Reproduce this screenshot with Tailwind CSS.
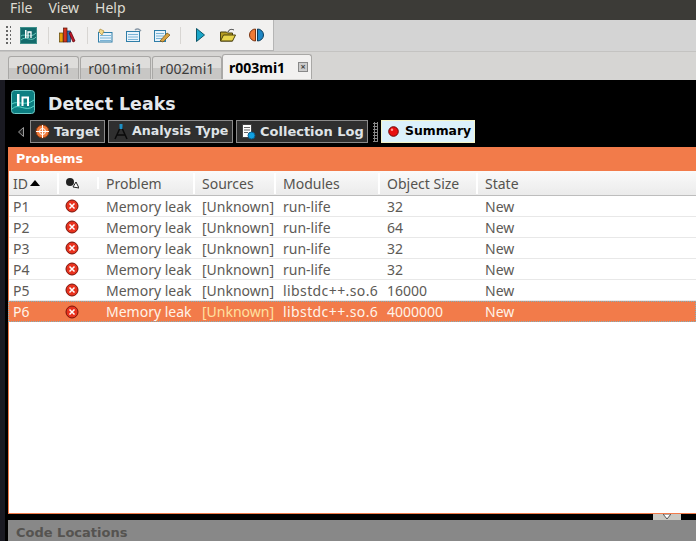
<!DOCTYPE html>
<html><head><meta charset="utf-8"><script src="https://cdn.jsdelivr.net/npm/@tailwindcss/browser@4"></script></head>
<body class="m-0 overflow-hidden bg-black">
<div class="w-[696px] h-[541px] flex flex-col overflow-hidden font-['Noto_Sans',sans-serif] text-[14px]">
  <div class="h-[20px] bg-[#3c3b37] text-[#dfdbd2] flex items-start gap-[16px] pl-[10px] text-[14px] leading-[16px]"><span>File</span><span>View</span><span>Help</span></div>
  <div class="h-[31px] bg-[#d4d4d4] flex">
    <div class="w-[274px] h-[31px] bg-[#f2f1f0] border-r border-b border-[#b5b5b5] flex items-center pl-[2px]">
      <div class="w-[6px] h-[20px] ml-[3px] bg-[radial-gradient(#666_1px,transparent_1.2px)] bg-[length:4px_4px]"></div>
      <svg class="ml-[9px]" width="17" height="17" viewBox="0 0 17 17"><rect x=".5" y=".5" width="16" height="16" fill="#136b6c" stroke="#3f8f8a"/><path d="M1 13C6 8 11 16 16 10M1 9C5 6 10 12 16 6" stroke="#69c9bd" fill="none"/><rect x="5" y="3" width="1.500" height="8" fill="#fff"/><path d="M8 11V5h3v6" stroke="#fff" fill="none" stroke-width="1.300"/></svg>
      <div class="w-px h-[17px] bg-[#d8d6d3] ml-[11px]"></div>
      <svg class="ml-[10px]" width="17" height="16" viewBox="0 0 17 16"><rect x=".5" y="6" width="3.500" height="9" fill="#eba10a" stroke="#5c4200" stroke-width=".7"/><rect x="4.500" y="1" width="3.500" height="14" fill="#d2341f" stroke="#5a1005" stroke-width=".7"/><rect x="8.500" y="4" width="3" height="11" fill="#2d6fb8" stroke="#12325c" stroke-width=".7"/><path d="M12 5l4 9-2 1-4-9z" fill="#c4162c" stroke="#500" stroke-width=".7"/></svg>
      <div class="w-px h-[17px] bg-[#d8d6d3] ml-[11px]"></div>
      <svg class="ml-[10px]" width="15" height="15" viewBox="0 0 15 15"><rect x=".5" y="4.500" width="13.500" height="9.500" fill="#e8f3fb" stroke="#2f7ea8"/><path d="M2 7.500h11M2 10h11M2 12.500h11" stroke="#79b3d6"/><path d="M2 1l4 2-2 4-3-3z" fill="#f3d98a" stroke="#a8893b" stroke-width=".7"/></svg>
      <svg class="ml-[13px]" width="16" height="16" viewBox="0 0 16 16"><rect x=".5" y="4.500" width="13" height="10" fill="#e8f3fb" stroke="#2f7ea8"/><path d="M2 7.500h10M2 10h10M2 12.500h10" stroke="#79b3d6"/><path d="M9 3c2-2 4-1 6 1" stroke="#8a9aa8" fill="none" stroke-width="1.500"/></svg>
      <svg class="ml-[12px]" width="17" height="16" viewBox="0 0 17 16"><rect x=".5" y="3.500" width="11" height="11" fill="#e8f3fb" stroke="#2f7ea8"/><path d="M2 6.500h8M2 9h8M2 11.500h6" stroke="#79b3d6"/><path d="M6 14l7-8 3 2-7 7z" fill="#d9a441" stroke="#6e4c10" stroke-width=".7"/></svg>
      <div class="w-px h-[17px] bg-[#d8d6d3] ml-[9px]"></div>
      <svg class="ml-[15px]" width="9" height="14" viewBox="0 0 9 14"><path d="M.5 .5l8 6.500-8 6.500z" fill="#1aa6c8" stroke="#0b5568"/></svg>
      <svg class="ml-[15px]" width="16" height="14" viewBox="0 0 16 14"><path d="M.5 4h6l1 1h5v8h-12z" fill="#b59c22" stroke="#4b410c"/><path d="M.5 13l3-6h12l-3 6z" fill="#e8d44a" stroke="#4b410c"/><path d="M8 4c1-3 4-3 6-2" stroke="#333" fill="none"/></svg>
      <svg class="ml-[13px]" width="15" height="14" viewBox="0 0 15 14"><path d="M6.500 1A6 6 0 0 0 6.500 13z" fill="#ef7a35" stroke="#7a3412"/><path d="M8.500 1A6 6 0 0 1 8.500 13z" fill="#1f86c4" stroke="#0c3d5c"/></svg>
    </div>
  </div>
  <div class="h-[29px] bg-[#d6d5d3] flex items-end pl-[8px] border-t border-[#c4c3c1] text-[14px] text-[#3c3c3c]">
    <div class="w-[71px] h-[23px] mr-px bg-[linear-gradient(#dedddb_50%,#c8c7c5_50%)] border border-b-0 border-[#a9a8a6] rounded-t-[3px] flex items-center justify-center mb-[1px]">r000mi1</div>
    <div class="w-[71px] h-[23px] mr-px bg-[linear-gradient(#dedddb_50%,#c8c7c5_50%)] border border-b-0 border-[#a9a8a6] rounded-t-[3px] flex items-center justify-center mb-[1px]">r001mi1</div>
    <div class="w-[70px] h-[23px] bg-[linear-gradient(#dedddb_50%,#c8c7c5_50%)] border border-b-0 border-[#a9a8a6] rounded-t-[3px] flex items-center justify-center mb-[1px]">r002mi1</div>
    <div class="w-[90px] h-[25px] bg-[#f2f1f0] border border-b-0 border-[#a9a8a6] rounded-t-[3px] flex items-center pl-[6px] font-bold text-black gap-[13px] mb-[1px]">r003mi1<span class="w-[10px] h-[10px] bg-[#ccc] border border-[#888] text-[9px] leading-[8px] text-center text-[#444]">×</span></div>
  </div>
  <div class="flex-1 flex bg-black min-h-0">
    <div class="w-[8px] bg-[linear-gradient(90deg,#1a1a22_0,#1a1a22_5px,#000_5px)]"></div>
    <div class="flex-1 flex flex-col min-w-0 relative">
      <div class="h-[67px] -ml-[5px] pt-[10px] pl-[8px] relative">
        <div class="flex items-center h-[24px]">
          <svg width="24" height="24" viewBox="0 0 24 24"><rect x=".5" y=".5" width="23" height="23" rx="3" fill="#0c7f82" stroke="#6fc9c5"/><path d="M1 19C8 12 14 23 23 16M1 14C6 10 14 17 23 10" stroke="#5cd8cc" fill="none"/><rect x="6" y="4" width="2.500" height="12" fill="#fff"/><path d="M11.500 16V7.500h5.500V16" stroke="#fff" fill="none" stroke-width="2"/></svg>
          <span class="ml-[13px] mt-[3px] font-['DejaVu_Sans',sans-serif] font-bold text-[#e4e8ec] text-[17.400px] leading-[24px] whitespace-nowrap">Detect Leaks</span>
        </div>
        <div class="flex items-center mt-[6px] h-[23px] font-['DejaVu_Sans',sans-serif] font-bold text-[13px] text-[#dfe3e6] whitespace-nowrap">
          <svg class="ml-[7px] shrink-0" width="6" height="10" viewBox="0 0 6 10"><path d="M5.500.5L.5 5l5 4.500z" fill="#222" stroke="#999"/></svg>
          <div class="ml-[6px] w-[75px] h-[23px] bg-[#2f2f2f] border border-[#8a8a8a] flex items-center pl-[4px] gap-[4px] text-[12.700px]">
            <svg class="shrink-0" width="15" height="15" viewBox="0 0 15 15"><circle cx="7.500" cy="7.500" r="6.500" fill="#f07a3a" stroke="#8a3a10"/><circle cx="7.500" cy="7.500" r="3" fill="none" stroke="#fff"/><path d="M7.500 1v13M1 7.500h13" stroke="#fff"/></svg><span>Target</span></div>
          <div class="ml-[3px] w-[125px] h-[23px] bg-[#2f2f2f] border border-[#8a8a8a] flex items-center pl-[5px] gap-[4px] text-[12.600px]">
            <svg class="shrink-0" width="14" height="17" viewBox="0 0 14 17"><path d="M7 3L1 16M7 3l6 13M3 12h8" stroke="#0a0a0a" stroke-width="1.500" fill="none"/><rect x="5.500" y="1" width="3" height="5" fill="#1d8fc4"/></svg><span>Analysis Type</span></div>
          <div class="ml-[3px] w-[132px] h-[23px] bg-[#2f2f2f] border border-[#8a8a8a] flex items-center pl-[4px] gap-[4px]">
            <svg class="shrink-0" width="15" height="17" viewBox="0 0 15 17"><rect x="1.500" y="1.500" width="9" height="13" fill="#fff" stroke="#444"/><path d="M3 4.500h6M3 7h6M3 9.500h4" stroke="#666"/><circle cx="10.500" cy="12.500" r="3.500" fill="#10a0e0" stroke="#0a5a88"/></svg><span>Collection Log</span></div>
          <div class="ml-[5px] w-[5px] h-[20px] bg-[radial-gradient(#888_1px,transparent_1.2px)] bg-[length:3px_3px]"></div>
          <div class="ml-[3px] w-[94px] h-[23px] bg-[#dcf1fb] border border-[#f4f4c8] flex items-center pl-[6px] gap-[6px] text-black text-[12.400px]">
            <svg class="shrink-0" width="11" height="11" viewBox="0 0 11 11"><circle cx="5.500" cy="5.500" r="4.800" fill="#e81010" stroke="#6a0808"/><circle cx="4" cy="3.800" r="1.200" fill="#ff9a90"/></svg><span>Summary</span></div>
        </div>
      </div>
      <div class="h-[24px] bg-[#f27b4a] text-white font-['DejaVu_Sans',sans-serif] font-bold text-[12.700px] leading-[24px] pl-[8px]">Problems</div>
      <div class="h-[343px] bg-white border-l border-b border-[#f27b4a] flex flex-col text-[#5d5a56]">
        <div class="h-[25px] flex items-center bg-[linear-gradient(#fafafa,#ebebeb)] border-b border-[#bdbdbd] text-[#55534f]">
          <div class="w-[50px] pl-[4px] flex items-center gap-[2px] border-r-2 border-white">ID<svg width="10" height="6"><path d="M0 6L5 0l5 6z" fill="#000"/></svg></div>
          <div class="w-[40px] pl-[6px] border-r-2 border-white"><svg width="14" height="12" viewBox="0 0 14 12"><circle cx="5" cy="5" r="4" fill="#222"/><path d="M8 10l3-5 3 6z" fill="#fff" stroke="#222"/></svg></div>
          <div class="w-[96px] pl-[7px] border-r-2 border-white">Problem</div><div class="w-[81px] pl-[7px] border-r-2 border-white">Sources</div><div class="w-[104px] pl-[7px] border-r-2 border-white">Modules</div><div class="w-[98px] pl-[7px] border-r-2 border-white">Object Size</div><div class="pl-[7px]">State</div>
        </div>
        <div class="h-[21px] flex items-center border-b border-[#e8e8e8]"><div class="w-[50px] pl-[4px]">P1</div><div class="w-[40px] pl-[6px]"><svg width="14" height="14" viewBox="0 0 14 14"><circle cx="7" cy="7" r="6" fill="#e8321e" stroke="#7a1208"/><path d="M4.500 4.500l5 5M9.500 4.500l-5 5" stroke="#fff" stroke-width="1.500"/></svg></div><div class="w-[96px] pl-[7px]">Memory leak</div><div class="w-[81px] pl-[7px]">[Unknown]</div><div class="w-[104px] pl-[7px] whitespace-nowrap">run-life</div><div class="w-[98px] pl-[7px]">32</div><div class="pl-[7px]">New</div></div>
        <div class="h-[21px] flex items-center border-b border-[#e8e8e8]"><div class="w-[50px] pl-[4px]">P2</div><div class="w-[40px] pl-[6px]"><svg width="14" height="14" viewBox="0 0 14 14"><circle cx="7" cy="7" r="6" fill="#e8321e" stroke="#7a1208"/><path d="M4.500 4.500l5 5M9.500 4.500l-5 5" stroke="#fff" stroke-width="1.500"/></svg></div><div class="w-[96px] pl-[7px]">Memory leak</div><div class="w-[81px] pl-[7px]">[Unknown]</div><div class="w-[104px] pl-[7px] whitespace-nowrap">run-life</div><div class="w-[98px] pl-[7px]">64</div><div class="pl-[7px]">New</div></div>
        <div class="h-[21px] flex items-center border-b border-[#e8e8e8]"><div class="w-[50px] pl-[4px]">P3</div><div class="w-[40px] pl-[6px]"><svg width="14" height="14" viewBox="0 0 14 14"><circle cx="7" cy="7" r="6" fill="#e8321e" stroke="#7a1208"/><path d="M4.500 4.500l5 5M9.500 4.500l-5 5" stroke="#fff" stroke-width="1.500"/></svg></div><div class="w-[96px] pl-[7px]">Memory leak</div><div class="w-[81px] pl-[7px]">[Unknown]</div><div class="w-[104px] pl-[7px] whitespace-nowrap">run-life</div><div class="w-[98px] pl-[7px]">32</div><div class="pl-[7px]">New</div></div>
        <div class="h-[21px] flex items-center border-b border-[#e8e8e8]"><div class="w-[50px] pl-[4px]">P4</div><div class="w-[40px] pl-[6px]"><svg width="14" height="14" viewBox="0 0 14 14"><circle cx="7" cy="7" r="6" fill="#e8321e" stroke="#7a1208"/><path d="M4.500 4.500l5 5M9.500 4.500l-5 5" stroke="#fff" stroke-width="1.500"/></svg></div><div class="w-[96px] pl-[7px]">Memory leak</div><div class="w-[81px] pl-[7px]">[Unknown]</div><div class="w-[104px] pl-[7px] whitespace-nowrap">run-life</div><div class="w-[98px] pl-[7px]">32</div><div class="pl-[7px]">New</div></div>
        <div class="h-[21px] flex items-center border-b border-[#e8e8e8]"><div class="w-[50px] pl-[4px]">P5</div><div class="w-[40px] pl-[6px]"><svg width="14" height="14" viewBox="0 0 14 14"><circle cx="7" cy="7" r="6" fill="#e8321e" stroke="#7a1208"/><path d="M4.500 4.500l5 5M9.500 4.500l-5 5" stroke="#fff" stroke-width="1.500"/></svg></div><div class="w-[96px] pl-[7px]">Memory leak</div><div class="w-[81px] pl-[7px]">[Unknown]</div><div class="w-[104px] pl-[7px] tracking-[0.4px] whitespace-nowrap">libstdc++.so.6</div><div class="w-[98px] pl-[7px]">16000</div><div class="pl-[7px]">New</div></div>
        <div class="h-[21px] flex items-center bg-[#f27b4a] text-[#fff3e8] border border-dotted border-[#7fb0c0] -ml-px"><div class="w-[50px] pl-[4px]">P6</div><div class="w-[40px] pl-[6px]"><svg width="14" height="14" viewBox="0 0 14 14"><circle cx="7" cy="7" r="6" fill="#e8321e" stroke="#7a1208"/><path d="M4.500 4.500l5 5M9.500 4.500l-5 5" stroke="#fff" stroke-width="1.500"/></svg></div><div class="w-[96px] pl-[7px]">Memory leak</div><div class="w-[81px] pl-[7px] text-[#ffe0a0]">[Unknown]</div><div class="w-[104px] pl-[7px] tracking-[0.4px] whitespace-nowrap">libstdc++.so.6</div><div class="w-[98px] pl-[7px]">4000000</div><div class="pl-[7px]">New</div></div>
      </div>
      <div class="h-[6px] bg-black relative"><div class="absolute right-[15px] top-0 w-[28px] h-[6px] bg-[#c9c8c2] flex justify-center"><svg width="8" height="5"><path d="M0 0h8L4 5z" fill="#fff" stroke="#555"/></svg></div></div>
      <div class="h-[21px] bg-[#888888] text-[#555350] font-['DejaVu_Sans',sans-serif] font-bold text-[13px] leading-[26px] pl-[8px]">Code Locations</div>
    </div>
  </div>
</div>
</body></html>
